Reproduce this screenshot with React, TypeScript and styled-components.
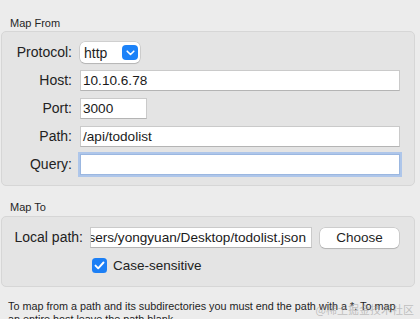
import React from "react";
import styled, { createGlobalStyle } from "styled-components";

const Global = createGlobalStyle`
  html, body { margin: 0; padding: 0; background: #ececec; }
  body { font-family: "Liberation Sans", Arial, sans-serif; color: #1f1f1f; }
`;

const Page = styled.div`
  position: relative;
  width: 420px;
  height: 319px;
  overflow: hidden;
  background: #ececec;
  padding-top: 17px;
  box-sizing: border-box;
`;

const SectionTitle = styled.div<{ $top?: number }>`
  font-size: 11px;
  line-height: 13px;
  padding-left: 10px;
  margin-top: ${(p) => p.$top ?? 0}px;
  margin-bottom: ${(p) => (p.$top ? 2 : 1)}px;
  color: #262626;
`;

const GroupBox = styled.div<{ $label: number; $gap: number }>`
  margin-left: 1px;
  width: 414px;
  box-sizing: border-box;
  background: #e4e4e4;
  border: 1px solid #d6d6d6;
  border-radius: 5px;
  padding: 10px 14px 10px 0;
  display: grid;
  grid-template-columns: ${(p) => p.$label}px 1fr;
  column-gap: ${(p) => p.$gap}px;
  row-gap: 7px;
  align-items: center;
`;

const Label = styled.div`
  font-size: 14px;
  line-height: 21px;
  text-align: right;
  color: #222;
`;

const Field = styled.div<{ $width?: number; $focused?: boolean }>`
  height: 21px;
  box-sizing: border-box;
  width: ${(p) => (p.$width ? `${p.$width}px` : "100%")};
  background: #fff;
  border: 1px solid #cacaca;
  border-bottom-color: #b4b4b4;
  font-size: 13.6px;
  line-height: 19px;
  padding: 0 2px;
  white-space: nowrap;
  overflow: hidden;
  color: #1a1a1a;
  ${(p) =>
    p.$focused
      ? `border-color: #9bb7e0; box-shadow: 0 0 0 2px #aec6ea;`
      : ""}
`;

const ClippedField = styled(Field)`
  display: flex;
  justify-content: flex-end;
  padding-right: 5px;
`;

const Popup = styled.div`
  width: 60px;
  height: 21px;
  box-sizing: border-box;
  background: #fff;
  border-radius: 5px;
  box-shadow: 0 0 0 0.5px rgba(0, 0, 0, 0.18), 0 1px 1px rgba(0, 0, 0, 0.12);
  display: flex;
  align-items: center;
  justify-content: space-between;
  padding: 0 2px 0 4px;
  font-size: 14px;
`;

const PopupArrow = styled.div`
  width: 16px;
  height: 15px;
  border-radius: 4px;
  background: #1c82f8;
  display: flex;
  align-items: center;
  justify-content: center;
`;

const PathRow = styled.div`
  display: flex;
  align-items: center;
  gap: 8px;
`;

const Button = styled.div`
  width: 79px;
  height: 20px;
  box-sizing: border-box;
  background: #fff;
  border-radius: 5px;
  box-shadow: 0 0 0 0.5px rgba(0, 0, 0, 0.2), 0 1px 1px rgba(0, 0, 0, 0.12);
  font-size: 13.5px;
  line-height: 20px;
  text-align: center;
  flex-shrink: 0;
`;

const CheckRow = styled.label`
  display: flex;
  align-items: center;
  gap: 6px;
  height: 21px;
  padding-left: 2px;
  font-size: 13.5px;
  color: #222;
`;

const Check = styled.div`
  width: 15px;
  height: 15px;
  border-radius: 3.5px;
  background: #1c7ff5;
  display: flex;
  align-items: center;
  justify-content: center;
`;

const Note = styled.div`
  margin-top: 13px;
  padding: 0 18px 0 8px;
  font-size: 10.8px;
  line-height: 13px;
  color: #1e1e1e;
`;

const Watermark = styled.div`
  position: absolute;
  right: 6px;
  bottom: 3px;
  font-family: "Noto Sans CJK SC", sans-serif;
  font-size: 11px;
  line-height: 13px;
  color: rgba(150, 150, 150, 0.55);
`;

export default function App() {
  return (
    <Page>
      <Global />
      <SectionTitle>Map From</SectionTitle>
      <GroupBox $label={70} $gap={8}>
        <Label>Protocol:</Label>
        <Popup>
          <span>http</span>
          <PopupArrow>
            <svg width="9" height="6" viewBox="0 0 9 6">
              <path d="M1.2 1.2 L4.5 4.5 L7.8 1.2" fill="none" stroke="#fff" strokeWidth="1.6" strokeLinecap="round" strokeLinejoin="round" />
            </svg>
          </PopupArrow>
        </Popup>
        <Label>Host:</Label>
        <Field>10.10.6.78</Field>
        <Label>Port:</Label>
        <Field $width={67}>3000</Field>
        <Label>Path:</Label>
        <Field>/api/todolist</Field>
        <Label>Query:</Label>
        <Field $focused />
      </GroupBox>
      <SectionTitle $top={15}>Map To</SectionTitle>
      <GroupBox $label={81} $gap={7}>
        <Label>Local path:</Label>
        <PathRow>
          <ClippedField $width={222}>
            <span>/Users/yongyuan/Desktop/todolist.json</span>
          </ClippedField>
          <Button>Choose</Button>
        </PathRow>
        <span />
        <CheckRow>
          <Check>
            <svg width="11" height="9" viewBox="0 0 11 9">
              <path d="M1.5 4.6 L4.2 7.3 L9.5 1.5" fill="none" stroke="#fff" strokeWidth="1.9" strokeLinecap="round" strokeLinejoin="round" />
            </svg>
          </Check>
          Case-sensitive
        </CheckRow>
      </GroupBox>
      <Note>
        To map from a path and its subdirectories you must end the path with a *. To map an entire host leave the path blank.
      </Note>
      <Watermark>@稀土掘金技术社区</Watermark>
    </Page>
  );
}
